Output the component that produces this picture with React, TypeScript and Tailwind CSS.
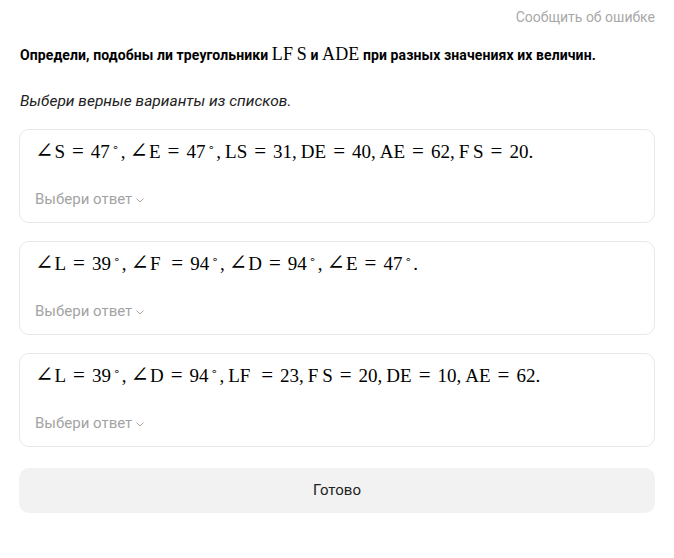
import React from 'react';

const serif = '"Liberation Serif", "DejaVu Serif", serif';

const M: React.FC<{ children: React.ReactNode }> = ({ children }) => (
  <span style={{ fontFamily: serif }}>{children}</span>
);

const Angle = () => (
  <span className="text-[22px] leading-none mr-[1px]" style={{ fontFamily: '"DejaVu Serif", serif' }}>∠</span>
);

// one equality, e.g. ∠S = 47°,
const Eq: React.FC<{ left: string; right: string; ang?: boolean; deg?: boolean; last?: boolean }> = ({ left, right, ang, deg, last }) => (
  <>
    {ang && <Angle />}
    <span>{left}</span>
    <span className="mx-[7px] text-[21px] leading-none">=</span>
    <span>{right}</span>
    {deg && (
      <span className="relative -top-[7px] text-[11px] leading-none ml-[2px] mr-[2px]" style={{ fontFamily: '"DejaVu Sans", sans-serif' }}>
        ∘
      </span>
    )}
    <span className={last ? '' : 'mr-[4px]'}>{last ? '.' : ','}</span>
  </>
);

type Item = { left: string; right: string; ang?: boolean; deg?: boolean };

const rows: Item[][] = [
  [
    { left: 'S', right: '47', ang: true, deg: true },
    { left: 'E', right: '47', ang: true, deg: true },
    { left: 'LS', right: '31' },
    { left: 'DE', right: '40' },
    { left: 'AE', right: '62' },
    { left: 'F\u2009S', right: '20' },
  ],
  [
    { left: 'L', right: '39', ang: true, deg: true },
    { left: 'F\u2009', right: '94', ang: true, deg: true },
    { left: 'D', right: '94', ang: true, deg: true },
    { left: 'E', right: '47', ang: true, deg: true },
  ],
  [
    { left: 'L', right: '39', ang: true, deg: true },
    { left: 'D', right: '94', ang: true, deg: true },
    { left: 'LF\u2009', right: '23' },
    { left: 'F\u2009S', right: '20' },
    { left: 'DE', right: '10' },
    { left: 'AE', right: '62' },
  ],
];

const Chevron = () => (
  <svg width="10" height="10" viewBox="0 0 10 10" className="ml-[3px] mt-[2px]">
    <path d="M1.5 3.5 L5 7 L8.5 3.5" fill="none" stroke="#a3a3a3" strokeWidth="1" />
  </svg>
);

const App: React.FC = () => {
  return (
    <div className="w-[674px] h-[558px] bg-white px-[19px] pt-[7px]" style={{ fontFamily: 'Roboto, "Noto Sans", sans-serif' }}>
      <div className="flex justify-end">
        <span className="text-[14px] text-[#a8a8a8] leading-[20px]" style={{ fontFamily: 'Roboto, sans-serif' }}>
          Сообщить об ошибке
        </span>
      </div>

      <h1 className="mt-[16px] pl-[1px] text-[14px] font-bold text-black leading-[22px]" style={{ fontFamily: 'Roboto, sans-serif', letterSpacing: '0.1px' }}>
        Определи, подобны ли треугольники <M><span className="text-[18px] font-normal">LF&#8201;S</span></M> и{' '}
        <M><span className="text-[18px] font-normal">ADE</span></M> при разных значениях их величин.
      </h1>

      <p className="mt-[24px] pl-[1px] text-[15.5px] italic text-[#222] leading-[20px]" style={{ fontFamily: 'Roboto, sans-serif' }}>
        Выбери верные варианты из списков.
      </p>

      <div className="mt-[18px] flex flex-col gap-[18px]">
        {rows.map((row, i) => (
          <div key={i} className="h-[94px] rounded-[10px] border border-[#e8e8e8] px-[15px] pt-[9px]">
            <div className="h-[26px] text-[19px] text-black leading-[26px] whitespace-nowrap">
              <M>
                {row.map((it, j) => (
                  <Eq key={j} {...it} last={j === row.length - 1} />
                ))}
              </M>
            </div>
            <div className="mt-[24px] flex items-center text-[15px] text-[#a3a3a3] leading-[20px]">
              Выбери ответ
              <Chevron />
            </div>
          </div>
        ))}
      </div>

      <button className="mt-[21px] w-full h-[45px] rounded-[10px] bg-[#f2f2f2] text-[15px] text-[#222]" style={{ fontFamily: 'Roboto, sans-serif' }}>
        Готово
      </button>
    </div>
  );
};

export default App;
